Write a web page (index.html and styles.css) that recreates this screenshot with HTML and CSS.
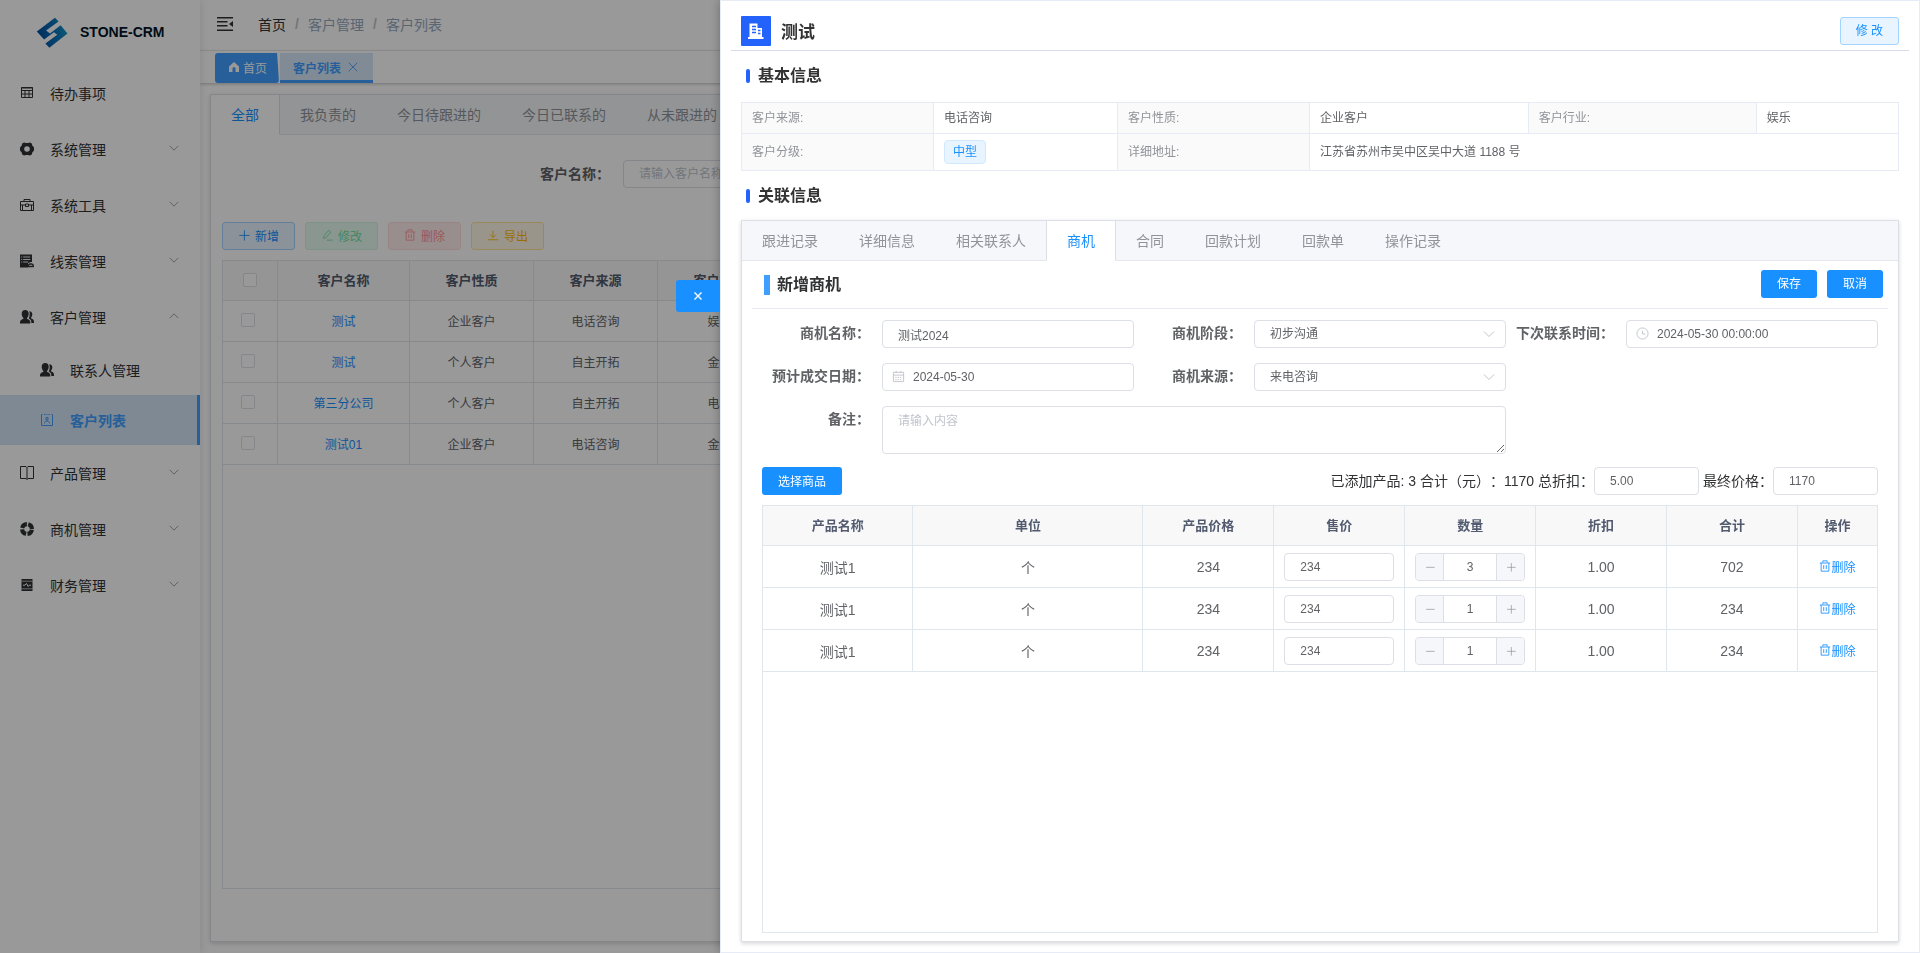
FILE: index.html
```html
<!DOCTYPE html>
<html lang="zh-CN">
<head>
<meta charset="utf-8">
<title>STONE-CRM</title>
<link rel="stylesheet" href="styles.css">
</head>
<body>
<svg class="sprite" aria-hidden="true">
  <symbol id="down" viewBox="0 0 14 14"><path d="M2 4.500 7 9.500l5-5" fill="none" stroke="currentColor"/></symbol>
  <symbol id="up" viewBox="0 0 14 14"><path d="M2 9.500 7 4.500l5 5" fill="none" stroke="currentColor"/></symbol>
  <symbol id="people" viewBox="0 0 14 14"><path fill="currentColor" d="M5.200 0C7.400 0 8.700 1.600 8.700 3.800c0 1.800-.8 3.300-1.700 4.100v.8c1 .6 3.300 1 3.300 3.300v1.500H0V12c0-2.300 2.400-2.700 3.400-3.300v-.8C2.500 7.100 1.700 5.600 1.700 3.800 1.700 1.600 3 0 5.200 0z"/><path fill="currentColor" d="M9.300 1.200c1.700-.2 3 1.200 3 3 0 1.500-.6 2.600-1.300 3.300v.8c1 .6 3 1.100 3 3.200v1.400h-2.700V12c0-2-1.300-3-2.600-3.600.7-1.200 1-2.500 1-4.100 0-1.200 0-2.200-.4-3.100z"/></symbol>
  <symbol id="trash" viewBox="0 0 14 14"><path d="M1 3.500h12M2.500 3.500v9.500h9v-9.500M4.500 3V1h5v2M5.500 6v4.500M8.500 6v4.500" fill="none" stroke="currentColor"/></symbol>
  <symbol id="cross" viewBox="0 0 14 14"><path d="M2 2l10 10M12 2 2 12" fill="none" stroke="currentColor"/></symbol>
  <symbol id="cross-bold" viewBox="0 0 10 10"><path d="M1.500 1.500l7 7M8.500 1.500l-7 7" fill="none" stroke="currentColor" stroke-width="1.400"/></symbol>
  <symbol id="plus" viewBox="0 0 14 14"><path d="M1.500 7.500h12M7.500 1.500v12" fill="none" stroke="currentColor"/></symbol>
  <symbol id="minus" viewBox="0 0 14 14"><path d="M1.500 7.500h12" fill="none" stroke="currentColor"/></symbol>
</svg>

<div class="app">
  <aside class="sidebar">
    <a class="brand" href="#">
      <svg class="brand-logo" viewBox="0 0 96 94"><defs><linearGradient id="lg" x1="0" y1="0.600" x2="1" y2="0.400"><stop offset="0" stop-color="#004a9c"/><stop offset=".55" stop-color="#0a6fb8"/><stop offset="1" stop-color="#1497c4"/></linearGradient></defs><path fill="url(#lg)" d="M2 44 57 2 68 14 30 41 42 50 74 25 95 50 40 93 28 80 64 54 54 46 24 68z"/></svg>
      <span>STONE-CRM</span>
    </a>
    <nav class="menu">
      <a class="menu-item" href="#"><svg viewBox="0 0 14 14"><path d="M1.500 1.500h11v10h-11zM1.500 4.500h11M1.500 8h11M5 4.500v7M9 4.500v7" fill="none" stroke="currentColor"/><path d="M1 1h12v2H1z" fill="currentColor" opacity=".5"/></svg><span>待办事项</span></a>
      <a class="menu-item" href="#"><svg viewBox="0 0 14 14"><path fill="currentColor" fill-rule="evenodd" d="M4 .5 6 1h2l2-.5 1.800 1L12.300 3.500 14 5.500v3l-1.700 2-.5 2-1.800 1L8 13H6l-2 .5-1.800-1-.5-2L0 8.500v-3l1.700-2 .5-2zM7 4.200a2.800 2.800 0 1 0 0 5.600 2.800 2.800 0 0 0 0-5.600z"/></svg><span>系统管理</span><svg class="arrow"><use href="#down"/></svg></a>
      <a class="menu-item" href="#"><svg viewBox="0 0 14 14"><path d="M.5 3.500h13v9H.5zM4 3V1.500h6V3M.5 7h4.500M9 7h4.500M2.500 7v5M11.500 7v5M5.500 6h3v2.500h-3z" fill="none" stroke="currentColor"/></svg><span>系统工具</span><svg class="arrow"><use href="#down"/></svg></a>
      <a class="menu-item" href="#"><svg viewBox="0 0 14 14"><path fill="currentColor" d="M0 .5h12v7.500h-1.500L8 9.500v4H0z"/><path d="M1.200 3h1M3.200 3h7M1.200 5.500h1M3.200 5.500h7M1.200 8h1M3.200 8h5" stroke="#fff" stroke-width=".9"/><path d="M8.500 12.500h4.700V11l-1.400-1h-2L8.500 11z" fill="none" stroke="currentColor" stroke-width="1.400"/></svg><span>线索管理</span><svg class="arrow"><use href="#down"/></svg></a>
      <a class="menu-item" href="#"><svg><use href="#people"/></svg><span>客户管理</span><svg class="arrow"><use href="#up"/></svg></a>
      <a class="menu-item sub" href="#"><svg><use href="#people"/></svg><span>联系人管理</span></a>
      <a class="menu-item sub active" href="#"><svg viewBox="0 0 14 14"><path d="M2.500 1.500h-1v11h11v-11h-1M4 1.500h1.500M6.500 1.500h1M8.500 1.500H10M4.500 10.500v-1L6 8h2l1.500 1.500v1M6 4.500h2V7H6z" fill="none" stroke="currentColor"/></svg><span>客户列表</span></a>
      <a class="menu-item" href="#"><svg viewBox="0 0 14 14"><path d="M6 .5H.5v12H6l1 1 1-1h5.500V.5H8l-1 1-1-1M7 1.500v12" fill="none" stroke="currentColor"/></svg><span>产品管理</span><svg class="arrow"><use href="#down"/></svg></a>
      <a class="menu-item" href="#"><svg viewBox="0 0 14 14"><circle cx="7" cy="7" r="4.900" fill="none" stroke="currentColor" stroke-width="4.100" stroke-dasharray="6.300 1.397" stroke-dashoffset="-.7"/></svg><span>商机管理</span><svg class="arrow"><use href="#down"/></svg></a>
      <a class="menu-item" href="#"><svg viewBox="0 0 14 14"><path fill="currentColor" d="M1.500 1h11v12h-11z"/><path d="M1.500 3.200h11M1.500 10.800h11" stroke="#fff" stroke-width=".6"/><path d="M3 7.200h2l1.500-1.700L8.200 8.500l1.200-1.300H11" fill="none" stroke="#fff"/></svg><span>财务管理</span><svg class="arrow"><use href="#down"/></svg></a>
    </nav>
  </aside>

  <main class="main">
    <header class="topbar">
      <button class="fold" aria-label="收起菜单"><svg viewBox="0 0 16 16"><path fill="currentColor" d="M0 1h16v1.500H0zM0 5h10.500v1.500H0zM0 9h10.500v1.500H0zM0 13.500h16V15H0zM12 8l4-3v6z"/></svg></button>
      <nav class="crumbs"><a href="#">首页</a><i>/</i><span>客户管理</span><i>/</i><span>客户列表</span></nav>
    </header>
    <div class="tags">
      <a class="tag home" href="#"><svg viewBox="0 0 12 12"><path fill="currentColor" d="M6 1 1 5.500V11h3.500V7.500a1.500 1.500 0 0 1 3 0V11H11V5.500z"/></svg>首页</a>
      <a class="tag current" href="#">客户列表<svg><use href="#cross"/></svg></a>
    </div>
    <section class="card list-card">
      <div class="tabs">
        <button class="tab on">全部</button><button class="tab">我负责的</button><button class="tab">今日待跟进的</button><button class="tab">今日已联系的</button><button class="tab">从未跟进的</button>
      </div>
      <div class="list-body">
        <div class="search"><label for="kw">客户名称：</label><input id="kw" class="input" placeholder="请输入客户名称"></div>
        <div class="tools">
          <button class="btn plain"><svg><use href="#plus"/></svg>新增</button>
          <button class="btn green"><svg viewBox="0 0 14 14"><path d="M3 11 3.500 8 9 1.500l2.500 2L6 10zM7 13h6.500" fill="none" stroke="currentColor"/></svg>修改</button>
          <button class="btn red"><svg><use href="#trash"/></svg>删除</button>
          <button class="btn amber"><svg viewBox="0 0 14 14"><path d="M7 2v8M3.500 6.500 7 10l3.500-3.500M1 12.500h12" fill="none" stroke="currentColor"/></svg>导出</button>
        </div>
        <div class="grid-wrap">
          <table class="grid customers">
            <colgroup><col class="c-check"><col class="c-name"><col class="c-std"><col class="c-std"><col class="c-std"><col></colgroup>
            <thead><tr><th><input type="checkbox" aria-label="全选"></th><th>客户名称</th><th>客户性质</th><th>客户来源</th><th>客户行业</th><th></th></tr></thead>
            <tbody>
              <tr><td><input type="checkbox" aria-label="选择"></td><td><a href="#">测试</a></td><td>企业客户</td><td>电话咨询</td><td>娱乐</td><td></td></tr>
              <tr><td><input type="checkbox" aria-label="选择"></td><td><a href="#">测试</a></td><td>个人客户</td><td>自主开拓</td><td>金融</td><td></td></tr>
              <tr><td><input type="checkbox" aria-label="选择"></td><td><a href="#">第三分公司</a></td><td>个人客户</td><td>自主开拓</td><td>电商</td><td></td></tr>
              <tr><td><input type="checkbox" aria-label="选择"></td><td><a href="#">测试01</a></td><td>企业客户</td><td>电话咨询</td><td>金融</td><td></td></tr>
            </tbody>
          </table>
        </div>
      </div>
    </section>
  </main>
</div>

<div class="mask"></div>

<section class="drawer" role="dialog" aria-label="测试">
  <button class="drawer-close" aria-label="关闭"><svg><use href="#cross-bold"/></svg></button>
  <header class="drawer-head">
    <svg class="badge" viewBox="0 0 30 30"><rect width="30" height="30" rx="1" fill="#2362fb"/><path fill="#fff" d="M7 21h1.500V7.500h8V12H21v9h1.500v2H7z"/><path d="M11 10.500h4M11 13.500h4M11 16.500h4M17 14.500h2.500M17 17.500h2.500" stroke="#2362fb" stroke-width="1.300"/></svg>
    <h1>测试</h1>
    <button class="btn plain edit">修 改</button>
  </header>

  <div class="drawer-body">
    <h2 class="heading">基本信息</h2>
    <table class="info">
      <colgroup><col class="i1"><col class="i2"><col class="i1"><col class="i3"><col class="i4"><col></colgroup>
      <tbody>
        <tr><th>客户来源:</th><td>电话咨询</td><th>客户性质:</th><td>企业客户</td><th>客户行业:</th><td>娱乐</td></tr>
        <tr class="tall"><th>客户分级:</th><td><span class="chip">中型</span></td><th>详细地址:</th><td colspan="3">江苏省苏州市吴中区吴中大道 1188 号</td></tr>
      </tbody>
    </table>
    <h2 class="heading">关联信息</h2>

    <section class="card deal-card">
      <div class="tabs">
        <button class="tab">跟进记录</button><button class="tab">详细信息</button><button class="tab">相关联系人</button><button class="tab on">商机</button><button class="tab">合同</button><button class="tab">回款计划</button><button class="tab">回款单</button><button class="tab">操作记录</button>
      </div>
      <div class="deal-head">
        <h3>新增商机</h3>
        <button class="btn solid">保存</button>
        <button class="btn solid">取消</button>
      </div>
      <div class="deal-body">
        <form class="deal-form">
          <div class="field"><label for="f1">商机名称：</label><input id="f1" class="input" value="测试2024"></div>
          <div class="field"><label for="f2">商机阶段：</label><div class="control"><select id="f2" class="input"><option>初步沟通</option></select><svg class="caret"><use href="#down"/></svg></div></div>
          <div class="field"><label for="f3">下次联系时间：</label><div class="control"><input id="f3" class="input with-icon" value="2024-05-30 00:00:00"><svg class="lead" viewBox="0 0 14 14"><path d="M7 4v3.500h3M13 7A6 6 0 1 1 1 7a6 6 0 0 1 12 0z" fill="none" stroke="currentColor"/></svg></div></div>
          <div class="field"><label for="f4">预计成交日期：</label><div class="control"><input id="f4" class="input with-icon" value="2024-05-30"><svg class="lead" viewBox="0 0 14 14"><path d="M1.500 2.500h11v10h-11zM1.500 5.500h11M4.500 1v2M9.500 1v2" fill="none" stroke="currentColor"/><path d="M3.500 8h7M3.500 10.500h7" fill="none" stroke="currentColor" stroke-dasharray="1.500 1"/></svg></div></div>
          <div class="field"><label for="f5">商机来源：</label><div class="control"><select id="f5" class="input"><option>来电咨询</option></select><svg class="caret"><use href="#down"/></svg></div></div>
          <div class="field wide"><label for="f6">备注：</label><textarea id="f6" class="input" placeholder="请输入内容"></textarea></div>
        </form>
        <div class="summary">
          <button class="btn solid">选择商品</button>
          <span class="total">已添加产品: 3 合计（元）：1170</span>
          <label for="disc">总折扣：</label><input id="disc" class="input" value="5.00">
          <label for="final">最终价格：</label><input id="final" class="input" value="1170">
        </div>
        <div class="grid-wrap">
          <table class="grid products">
            <colgroup><col class="p-name"><col class="p-unit"><col class="p-std"><col class="p-std"><col class="p-std"><col class="p-std"><col class="p-std"><col></colgroup>
            <thead><tr><th>产品名称</th><th>单位</th><th>产品价格</th><th>售价</th><th>数量</th><th>折扣</th><th>合计</th><th>操作</th></tr></thead>
            <tbody>
              <tr><td>测试1</td><td>个</td><td>234</td><td><input class="input" aria-label="售价" value="234"></td><td><div class="stepper"><button aria-label="减少"><svg><use href="#minus"/></svg></button><input aria-label="数量" value="3"><button aria-label="增加"><svg><use href="#plus"/></svg></button></div></td><td>1.00</td><td>702</td><td><a class="del" href="#"><svg><use href="#trash"/></svg>删除</a></td></tr>
              <tr><td>测试1</td><td>个</td><td>234</td><td><input class="input" aria-label="售价" value="234"></td><td><div class="stepper"><button aria-label="减少"><svg><use href="#minus"/></svg></button><input aria-label="数量" value="1"><button aria-label="增加"><svg><use href="#plus"/></svg></button></div></td><td>1.00</td><td>234</td><td><a class="del" href="#"><svg><use href="#trash"/></svg>删除</a></td></tr>
              <tr><td>测试1</td><td>个</td><td>234</td><td><input class="input" aria-label="售价" value="234"></td><td><div class="stepper"><button aria-label="减少"><svg><use href="#minus"/></svg></button><input aria-label="数量" value="1"><button aria-label="增加"><svg><use href="#plus"/></svg></button></div></td><td>1.00</td><td>234</td><td><a class="del" href="#"><svg><use href="#trash"/></svg>删除</a></td></tr>
            </tbody>
          </table>
        </div>
      </div>
    </section>
  </div>
</section>
</body>
</html>
```
FILE: styles.css
```css
* { box-sizing: border-box; }
body, button, input, select, textarea {
  font-family: "Liberation Sans", "Noto Sans CJK SC", sans-serif;
}
body { margin: 0; font-size: 14px; color: #303133; background: #fff; overflow: hidden; text-spacing-trim: space-all; }
a { color: inherit; text-decoration: none; }
button { padding: 0; border: 0; background: none; color: inherit; font-size: 14px; cursor: pointer; }
h1, h2, h3 { margin: 0; }
svg { width: 14px; height: 14px; flex: none; }
.sprite { display: none; }

/* Shell */
.app { display: flex; height: 100vh; }
.sidebar { flex: 0 0 200px; background: #fff; box-shadow: 1px 0 8px rgba(0, 21, 41, .1); z-index: 1; }
.brand { display: flex; align-items: center; gap: 12px; height: 65px; padding: 0 0 1px 36px; font-weight: bold; color: #001529; }
.brand-logo { width: 32px; height: 31px; }
.menu-item { display: flex; align-items: center; gap: 16px; height: 56px; padding: 0 20px; color: #303133; }
.menu-item span { flex: 1; }
.menu-item .arrow { width: 12px; height: 12px; margin-bottom: 2px; color: #909399; }
.menu-item.sub { height: 50px; padding-left: 40px; }
.menu-item.active { background: #d2e4f5; border-right: 3px solid #409eff; color: #409eff; font-weight: bold; }

.main { flex: 1; min-width: 0; display: flex; flex-direction: column; }
.topbar { display: flex; align-items: center; gap: 25px; height: 51px; padding: 0 17px 2px; border-bottom: 1px solid #f0f0f0; }
.fold { height: 16px; }
.fold svg { width: 16px; height: 16px; }
.crumbs { display: flex; align-items: center; color: #97a8be; }
.crumbs a { color: #303133; }
.crumbs i { width: 4px; margin: 0 9px; font-weight: bold; font-style: normal; color: #c0c4cc; }
.tags { display: flex; align-items: flex-end; gap: 1px; height: 32px; padding-left: 15px; box-shadow: 0 1px 3px rgba(0, 0, 0, .25); }
.tag { display: flex; align-items: center; height: 30px; padding-bottom: 2px; font-size: 12px; }
.tag.home { gap: 3px; width: 64px; padding-left: 13px; background: #409eff; color: #fff; border-radius: 3px; clip-path: polygon(0 0, 97% 0, 100% 100%, 0 100%); }
.tag.home svg { width: 12px; height: 12px; }
.tag.current { gap: 6px; padding: 1px 14px 0 13px; border-bottom: 3px solid #409eff; background: #d6e8fa; color: #409eff; font-weight: bold; }
.tag.current svg { width: 12px; height: 12px; }

/* Bordered tab cards */
.card { display: flex; flex-direction: column; min-height: 0; background: #fff; border: 1px solid #dcdfe6; box-shadow: 0 2px 4px rgba(0, 0, 0, .12), 0 0 6px rgba(0, 0, 0, .04); }
.tabs { display: flex; height: 40px; padding-right: 20px; background: #f5f7fa; border-bottom: 1px solid #e4e7ed; }
.tab { height: 40px; margin-left: -1px; padding: 0 20px 2px; border: 1px solid transparent; border-top: 0; color: #909399; white-space: nowrap; flex: none; }
.tab.on { background: #fff; color: #1890ff; border-left-color: #dcdfe6; border-right-color: #dcdfe6; }
.list-card { flex: 1; margin: 11px 10px 11px; }
.list-body { flex: 1; display: flex; flex-direction: column; padding: 25px 11px 52px; }
.search { display: flex; align-items: center; }
.search label { flex: 0 0 401px; padding: 0 13px 2px 0; text-align: right; font-weight: bold; color: #606266; }
.search .input { width: 220px; }
.tools { display: flex; gap: 10px; padding: 34px 0 10px; }

/* Controls */
.btn { display: inline-flex; align-items: center; justify-content: center; height: 28px; padding: 0 15px 2px; border: 1px solid transparent; border-radius: 3px; font-size: 12px; white-space: nowrap; }
.tools .btn { gap: 5px; width: 73px; }
.plain { background: #e8f4ff; border-color: #a3d3ff; color: #1890ff; }
.green { background: #e7faf0; border-color: #d0f5e0; color: #71e2a3; }
.red { background: #ffeded; border-color: #ffdbdb; color: #ff9292; }
.amber { background: #fff8e6; border-color: #ffe399; color: #ffba00; }
.btn svg { width: 12px; height: 12px; }
.solid { background: #1890ff; color: #fff; }
.input { width: 100%; height: 28px; padding: 0 15px; border: 1px solid #dcdfe6; border-radius: 4px; outline: 0; background: #fff; color: #606266; font-size: 12px; }
.input::placeholder { color: #c0c4cc; }
select.input { appearance: none; }
.with-icon { padding-left: 30px; }
input[type="checkbox"] { appearance: none; width: 14px; height: 14px; margin: 0; border: 1px solid #dcdfe6; border-radius: 2px; background: #fff; vertical-align: middle; }

/* Data grids */
.grid-wrap { flex: 1; min-height: 0; border: 1px solid #dfe6ec; }
.grid { width: 100%; table-layout: fixed; border-collapse: separate; border-spacing: 0; text-align: center; color: #606266; }
.grid th, .grid td { height: 41px; padding: 0 10px 2px; border-right: 1px solid #dfe6ec; border-bottom: 1px solid #dfe6ec; }
.grid th { height: 40px; padding-bottom: 3px; background: #f8f8f9; color: #515a6e; font-size: 13px; }
.grid th:last-child, .grid td:last-child { border-right: 0; }
.grid a { color: #1890ff; }
.customers td { font-size: 12px; }
.customers td:first-child { padding-right: 14px; }
.c-check { width: 55px; }
.c-name { width: 132px; }
.c-std { width: 124px; }
.products td { height: 42px; padding-bottom: 0; }
.p-name { width: 13.5%; }
.p-unit { width: 20.65%; }
.p-std { width: 11.75%; }
.grid .del { display: inline-flex; align-items: center; font-size: 12px; }
.del svg { width: 12px; height: 12px; }
.stepper { display: flex; height: 28px; border: 1px solid #dcdfe6; border-radius: 4px; overflow: hidden; }
.stepper button { display: flex; flex: 0 0 27px; align-items: center; justify-content: center; background: #f5f7fa; color: #909399; }
.stepper svg { width: 10px; height: 10px; }
.stepper input { flex: 1; min-width: 0; padding: 0; border: solid #dcdfe6; border-width: 0 1px; text-align: center; font-size: 12px; color: #606266; }

/* Overlay and drawer */
.mask { position: fixed; inset: 0; z-index: 2; background: rgba(0, 0, 0, .4); }
.drawer { position: fixed; inset: 0 0 0 37.5%; z-index: 3; display: flex; flex-direction: column; padding: 0 10px; background: #fff; border: 1px solid #e6ebf5; box-shadow: 0 0 10px rgba(0, 0, 0, .3); }
.drawer-close { position: absolute; top: 279px; right: 100%; display: flex; align-items: center; justify-content: center; width: 44px; height: 32px; margin-right: 1px; border-radius: 3px 0 0 3px; background: #1890ff; color: #fff; }
.drawer-close svg { width: 10px; height: 10px; }
.drawer-head { display: flex; align-items: center; gap: 10px; height: 50px; padding: 10px 10px 0; border-bottom: 1px solid #d3dce8; }
.badge { width: 30px; height: 30px; }
.drawer-head h1 { flex: 1; font-size: 17px; color: #333; }
.drawer-body { flex: 1; min-height: 0; display: flex; flex-direction: column; padding: 0 10px 10px; }
.heading { display: flex; align-items: center; gap: 8px; height: 49px; padding: 0 0 0 5px; font-size: 16px; line-height: 20px; flex: none; color: #333; }
.heading::before { content: ""; width: 4px; height: 14px; border-radius: 2px; background: #2362fb; }
.info { margin-top: 2px; width: 100%; table-layout: fixed; border-collapse: collapse; font-size: 12px; line-height: 16px; }
.info th, .info td { padding: 7px 10px; border: 1px solid #e6ebf5; text-align: left; font-weight: normal; color: #606266; }
.info th { background: #fafafa; color: #909399; }
.info .tall td { padding: 6px 10px; }
.i1 { width: 16.6%; }
.i2 { width: 15.9%; }
.i3 { width: 18.9%; }
.i4 { width: 19.7%; }
.chip { display: block; width: fit-content; padding: 3px 8px; border: 1px solid #d1e9ff; border-radius: 4px; background: #e8f4ff; color: #1890ff; }

.deal-card { flex: 1; }
.deal-card .tabs, .deal-head, .deal-form, .summary { flex: none; }
.deal-head { display: flex; align-items: center; gap: 10px; height: 48px; margin: 0 10px; padding: 0 5px 0 12px; border-bottom: 1px solid #e6e8f5; }
.deal-head h3 { flex: 1; display: flex; align-items: center; gap: 7px; font-size: 16px; line-height: 20px; color: #303133; }
.deal-head h3::before { content: ""; width: 6px; height: 20px; background: #409eff; }
.deal-head .btn { margin-bottom: 2px; }
.deal-body { flex: 1; min-height: 0; display: flex; flex-direction: column; padding: 11px 20px 8px; }
.deal-form { display: grid; grid-template-columns: repeat(3, 1fr); row-gap: 15px; }
.field { display: flex; }
.field label { flex: 0 0 120px; padding-right: 12px; text-align: right; line-height: 26px; font-weight: bold; color: #606266; }
.field.wide { grid-column: span 2; }
.field textarea { height: 48px; padding: 5px 15px; line-height: 18px; }
.control { flex: 1; position: relative; }
.caret, .lead { position: absolute; top: 7px; color: #c0c4cc; }
.caret { right: 10px; }
.lead { left: 10px; width: 13px; height: 13px; }
.summary { display: flex; align-items: center; padding: 13px 0 10px; color: #303133; }
.summary span, .summary label { padding-bottom: 2px; }
.total { margin: 0 4px 0 auto; }
.summary .input { width: 105px; }
.summary .input + label { margin-left: 4px; }
```
